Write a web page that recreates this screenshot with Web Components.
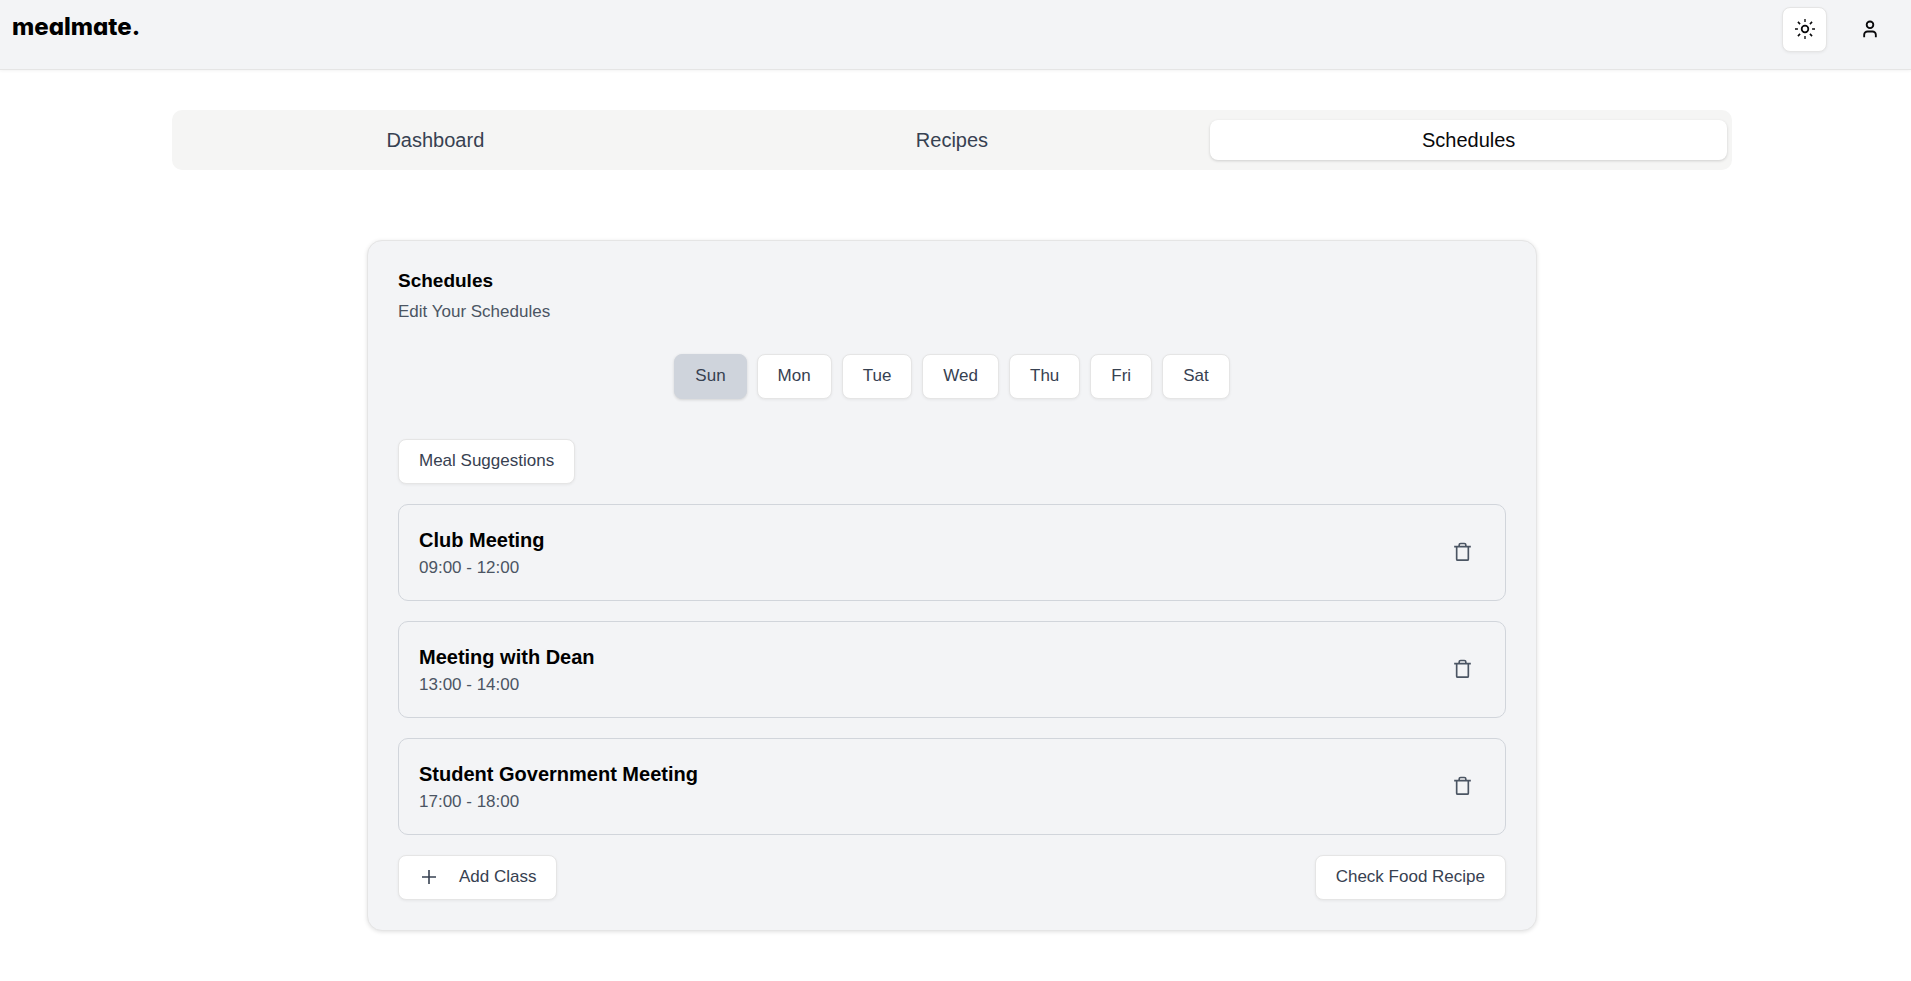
<!DOCTYPE html>
<html lang="en">
<head>
<meta charset="utf-8">
<title>mealmate. Schedules</title>
<style>
html, body { margin: 0; }
body { font-family: "Liberation Sans", Arial, sans-serif; background: #fff; color: #09090b; }
</style>
</head>
<body>
<meal-app></meal-app>
<script>
const icons = {
  sun: '<svg width="20" height="20" viewBox="0 0 15 15" fill="none" stroke="currentColor" stroke-width="1"><circle cx="7.5" cy="7.5" r="2.5" stroke-width="1.3"/><path d="M7.5 0v2.2M7.5 12.8V15M0 7.5h2.2M12.8 7.5H15"/><path stroke-width="1.2" d="M2.2 2.2l1.6 1.6M11.2 11.2l1.6 1.6M2.2 12.8l1.6-1.6M11.2 3.8l1.6-1.6"/></svg>',
  user: '<svg width="20" height="20" viewBox="0 0 24 24" fill="none" stroke="currentColor" stroke-width="2.2" stroke-linejoin="round"><path d="M19 22v-3a4 4 0 0 0-4-4H9a4 4 0 0 0-4 4v3"/><circle cx="12" cy="7" r="4"/></svg>',
  trash: '<svg width="25" height="25" viewBox="0 0 15 15" fill="none" stroke="currentColor" stroke-width="1" stroke-linejoin="round"><path d="M2.5 4h10M5.5 3.8V3a.9.9 0 0 1 .9-.9h2.2a.9.9 0 0 1 .9.9v.8M4 4v7.5a.6.6 0 0 0 .6.6h5.8a.6.6 0 0 0 .6-.6V4"/></svg>',
  plus: '<svg width="20" height="20" viewBox="0 0 20 20" fill="none" stroke="currentColor" stroke-width="1.6"><path d="M10 3v14M3 10h14"/></svg>'
};

function define(name, markup) {
  const template = document.createElement('template');
  template.innerHTML = markup;
  customElements.define(name, class extends HTMLElement {
    constructor() {
      super();
      this.attachShadow({ mode: 'open' }).append(template.content.cloneNode(true));
    }
    connectedCallback() {
      const button = this.shadowRoot.querySelector('button');
      if (button && this.hasAttribute('label')) button.setAttribute('aria-label', this.getAttribute('label'));
      if (button && this.hasAttribute('pressed')) button.setAttribute('aria-pressed', 'true');
      const icon = this.shadowRoot.querySelector('.icon');
      if (icon && this.hasAttribute('icon')) icon.innerHTML = icons[this.getAttribute('icon')];
    }
  });
}

define('meal-button', `
<style>
:host { display: block; }
button { display: flex; align-items: center; justify-content: center; gap: 20px; box-sizing: border-box; height: 45px; width: 100%; padding: 0 20px 2px; border: 1px solid #e5e5e5; border-radius: 8px; background: #fff; color: #374151; font: inherit; font-size: 17px; line-height: 24px; white-space: nowrap; box-shadow: 0 1px 3px rgba(0,0,0,.06); cursor: pointer; }
.icon { display: contents; }
svg { display: block; flex: none; }
:host([pressed]) button { background: #cfd4dc; border-color: #cfd4dc; box-shadow: 0 1px 3px rgba(0,0,0,.14); }
:host([square]) button { width: 45px; padding: 0 0 2px; gap: 0; color: #09090b; }
:host([plain]) button { border-color: transparent; background: none; box-shadow: none; }
:host([muted]) button { padding: 0; color: #4b5563; }
</style>
<button type="button"><span class="icon"></span><slot></slot></button>`);

define('meal-header', `
<style>
:host { display: block; }
header { display: flex; justify-content: space-between; align-items: flex-start; box-sizing: border-box; height: 70px; padding: 7px 19px 0 12px; background: #f3f4f6; border-bottom: 1px solid #e5e5e5; box-shadow: 0 1px 3px rgba(0,0,0,.05); }
a { font: 800 24px/40px Inter, sans-serif; font-feature-settings: "cv11"; color: #000; text-decoration: none; }
nav { display: flex; gap: 20px; }
</style>
<header>
  <a href="#">mealmate.</a>
  <nav>
    <meal-button square icon="sun" label="Toggle theme"></meal-button>
    <meal-button square plain icon="user" label="Account"></meal-button>
  </nav>
</header>`);

define('meal-tabs', `
<style>
:host { display: block; }
nav { display: grid; grid-template-columns: repeat(3, 1fr); padding: 10px 5px; border-radius: 10px; background: #f5f5f4; }
</style>
<nav><slot></slot></nav>`);

define('meal-tab', `
<style>
:host { display: block; }
a { display: block; border-radius: 8px; text-align: center; font-size: 20px; line-height: 40px; color: #374151; text-decoration: none; }
:host([active]) a { background: #fff; color: #09090b; box-shadow: 0 1px 3px rgba(0,0,0,.16); }
</style>
<a href="#"><slot></slot></a>`);

define('schedule-item', `
<style>
:host { display: block; }
article { display: flex; align-items: center; justify-content: space-between; padding: 20px; border: 1px solid #d1d5db; border-radius: 10px; }
h3 { margin: 0; font-size: 20px; line-height: 30px; color: #000; }
p { margin: 0; font-size: 17px; line-height: 25px; color: #4b5563; }
</style>
<article>
  <div><h3><slot></slot></h3><p><slot name="time"></slot></p></div>
  <meal-button square plain muted icon="trash" label="Delete"></meal-button>
</article>`);

define('schedule-card', `
<style>
:host { display: block; }
section { padding: 30px; border: 1px solid #e5e5e5; border-radius: 15px; background: #f3f4f6; box-shadow: 0 1px 4px rgba(0,0,0,.12); }
h2 { margin: 0 0 8px; font-size: 19px; line-height: 20px; color: #000; }
p { margin: 0 0 30px; font-size: 17px; line-height: 25px; color: #4b5563; }
.days { display: flex; justify-content: center; gap: 10px; margin-bottom: 40px; }
.list { display: grid; gap: 20px; }
.row { display: flex; justify-content: space-between; }
</style>
<section>
  <h2>Schedules</h2>
  <p>Edit Your Schedules</p>
  <div class="days">
    <meal-button pressed>Sun</meal-button>
    <meal-button>Mon</meal-button>
    <meal-button>Tue</meal-button>
    <meal-button>Wed</meal-button>
    <meal-button>Thu</meal-button>
    <meal-button>Fri</meal-button>
    <meal-button>Sat</meal-button>
  </div>
  <div class="list">
    <div class="row"><meal-button>Meal Suggestions</meal-button></div>
    <schedule-item>Club Meeting<span slot="time">09:00 - 12:00</span></schedule-item>
    <schedule-item>Meeting with Dean<span slot="time">13:00 - 14:00</span></schedule-item>
    <schedule-item>Student Government Meeting<span slot="time">17:00 - 18:00</span></schedule-item>
    <div class="row">
      <meal-button icon="plus">Add Class</meal-button>
      <meal-button>Check Food Recipe</meal-button>
    </div>
  </div>
</section>`);

define('meal-app', `
<style>
:host { display: block; }
main { padding: 40px 27px 40px 20px; }
meal-tabs { max-width: 1560px; margin: 0 auto 70px; }
schedule-card { max-width: 1170px; margin: 0 auto; }
</style>
<meal-header></meal-header>
<main>
  <meal-tabs>
    <meal-tab>Dashboard</meal-tab>
    <meal-tab>Recipes</meal-tab>
    <meal-tab active>Schedules</meal-tab>
  </meal-tabs>
  <schedule-card></schedule-card>
</main>`);
</script>
</body>
</html>
